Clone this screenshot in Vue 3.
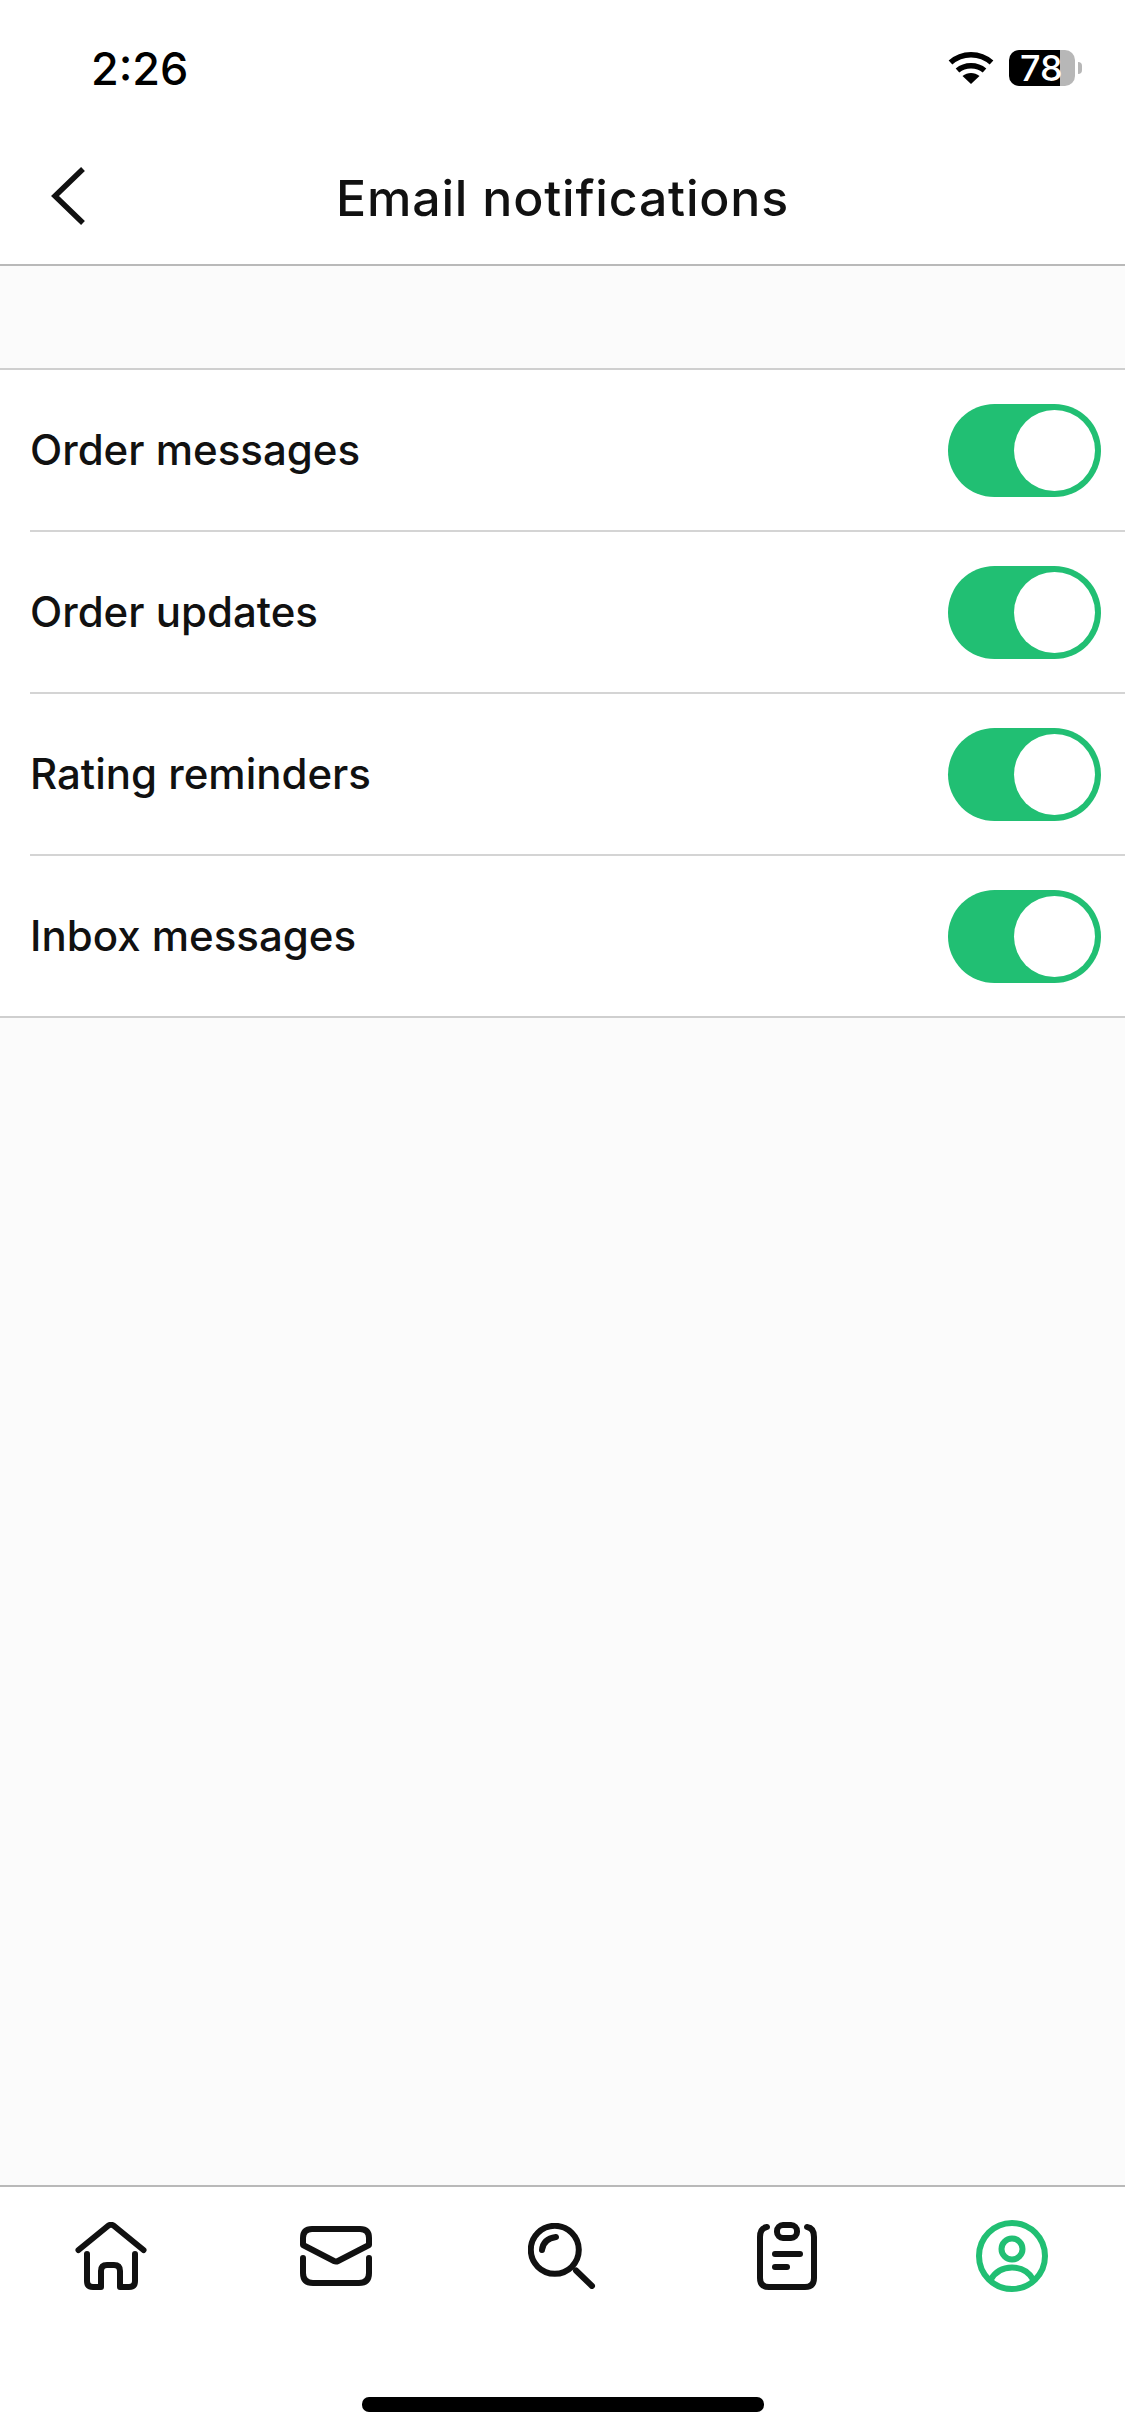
<script setup>
const rows = ['Order messages', 'Order updates', 'Rating reminders', 'Inbox messages']
</script>

<template>
  <div class="page">
    <div class="statusbar">
      <span class="time">2:26</span>
      <div class="status-right">
        <svg class="wifi" width="46" height="34" viewBox="0 0 46 34" fill="none" stroke="#000" stroke-width="5.5">
          <path d="M2.5 11.5C14 1 32 1 43.5 11.5" />
          <path d="M9.5 19.5C17 13 29 13 36.5 19.5" />
          <path d="M23 33L14.5 25C19.500 21 26.500 21 31.500 25Z" fill="#000" stroke="none" />
        </svg>
        <div class="battery">78</div>
        <div class="nub"></div>
      </div>
    </div>

    <div class="header">
      <svg class="back" width="36" height="60" viewBox="0 0 36 60" fill="none" stroke="#111" stroke-width="5.5">
        <path d="M33 3L5 30L33 57" />
      </svg>
      <span class="title">Email notifications</span>
    </div>

    <div class="main">
      <div class="list">
        <div v-for="row in rows" :key="row" class="row">
          <div class="row-inner">
            <span class="label">{{ row }}</span>
            <div class="toggle"><div class="knob"></div></div>
          </div>
        </div>
      </div>
    </div>

    <div class="tabbar">
      <div class="tabs">
        <div class="tab">
          <svg width="72" height="68" viewBox="0 0 72 68" fill="none" stroke="#111" stroke-width="6" stroke-linecap="round" stroke-linejoin="round">
            <path d="M3.500 28L33.500 3.500Q36 2 38.500 3.500L68.500 28" />
            <path d="M12 32V59Q12 65 18 65H26V49Q26 43 32 43H39Q45 43 45 49V65H54Q60 65 60 59V32" />
          </svg>
        </div>
        <div class="tab">
          <svg width="72" height="60" viewBox="0 0 72 60" fill="none" stroke="#111" stroke-width="6" stroke-linecap="round" stroke-linejoin="round">
            <path d="M3 19V12Q3 3 12 3H60Q69 3 69 12V19L38 35Q36 36 34 35Z" />
            <path d="M3 32V47Q3 57 13 57H59Q69 57 69 47V32" />
          </svg>
        </div>
        <div class="tab">
          <svg width="68" height="66" viewBox="0 0 68 66" fill="none" stroke="#111" stroke-width="6" stroke-linecap="round">
            <circle cx="26.800" cy="26.800" r="24" />
            <path d="M48 47.500L64 63" />
            <path d="M14 27Q15 16 28 14" />
          </svg>
        </div>
        <div class="tab">
          <svg width="60" height="68" viewBox="0 0 60 68" fill="none" stroke="#111" stroke-width="6" stroke-linecap="round" stroke-linejoin="round">
            <path d="M10 5Q3 6 3 15V56Q3 65 12 65H48Q57 65 57 56V15Q57 6 50 5" />
            <rect x="20" y="3" width="20" height="13" rx="6" />
            <path d="M18 32H43" />
            <path d="M18 45H30" />
          </svg>
        </div>
        <div class="tab">
          <svg width="72" height="72" viewBox="0 0 72 72" fill="none" stroke="#21bf73" stroke-width="6">
            <circle cx="36" cy="36" r="33" />
            <circle cx="36" cy="29" r="10.500" />
            <path d="M14.500 60C19 52 27 47.500 36 47.500C45 47.500 53 52 57.500 60" />
          </svg>
        </div>
      </div>
      <div class="home-bar"></div>
    </div>
  </div>
</template>

<style>
html, body {
  margin: 0;
  background: #fff;
}
</style>

<style scoped>
.page {
  width: 1125px;
  height: 2436px;
  display: flex;
  flex-direction: column;
  font-family: Inter, "Liberation Sans", sans-serif;
  color: #111;
  background: #fff;
}
.statusbar {
  height: 133px;
  padding: 3px 43px 0 91px;
  box-sizing: border-box;
  display: flex;
  align-items: center;
  justify-content: space-between;
}
.time {
  font-size: 45px;
  font-weight: 500;
  color: #000;
}
.status-right {
  display: flex;
  align-items: center;
}
.wifi {
  margin-right: 15px;
}
.battery {
  width: 66px;
  height: 36px;
  border-radius: 10px;
  background: linear-gradient(to right, #000 77%, #b7b7b7 77%);
  color: #fff;
  font-size: 36px;
  font-weight: 500;
  line-height: 36px;
  padding-left: 11px;
  box-sizing: border-box;
  white-space: nowrap;
}
.nub {
  width: 4px;
  height: 12px;
  margin-left: 3px;
  border-radius: 0 6px 6px 0;
  background: #b7b7b7;
}
.header {
  height: 133px;
  padding-bottom: 2px;
  box-sizing: border-box;
  border-bottom: 2px solid #b9b9b9;
  position: relative;
  display: flex;
  align-items: center;
  justify-content: center;
}
.back {
  position: absolute;
  left: 50px;
  top: 33px;
}
.title {
  font-size: 50px;
  font-weight: 550;
  letter-spacing: 0.8px;
}
.main {
  flex: 1;
  background: #fbfbfb;
  padding-top: 102px;
}
.list {
  background: #fff;
  border-top: 2px solid #cfcfcf;
  border-bottom: 2px solid #cfcfcf;
}
.row {
  padding-left: 30px;
}
.row-inner {
  height: 160px;
  padding-right: 24px;
  display: flex;
  align-items: center;
  justify-content: space-between;
  border-bottom: 2px solid #d4d4d4;
}
.row:last-child .row-inner {
  border-bottom: none;
}
.label {
  font-size: 42px;
  font-weight: 550;
  margin-top: -2px;
}
.toggle {
  width: 153px;
  height: 93px;
  padding: 6px;
  box-sizing: border-box;
  border-radius: 47px;
  background: #21bf73;
  display: flex;
  justify-content: flex-end;
}
.knob {
  width: 81px;
  height: 81px;
  border-radius: 50%;
  background: #fff;
}
.tabbar {
  height: 251px;
  box-sizing: border-box;
  border-top: 2px solid #b9b9b9;
  background: #fff;
  padding-top: 32px;
  display: flex;
  flex-direction: column;
}
.tabs {
  height: 74px;
  display: flex;
  margin-left: -2px;
}
.tab {
  flex: 1;
  display: flex;
  align-items: center;
  justify-content: center;
}
.home-bar {
  width: 402px;
  height: 15px;
  border-radius: 7px;
  background: #000;
  margin: 104px auto 0;
}
</style>
